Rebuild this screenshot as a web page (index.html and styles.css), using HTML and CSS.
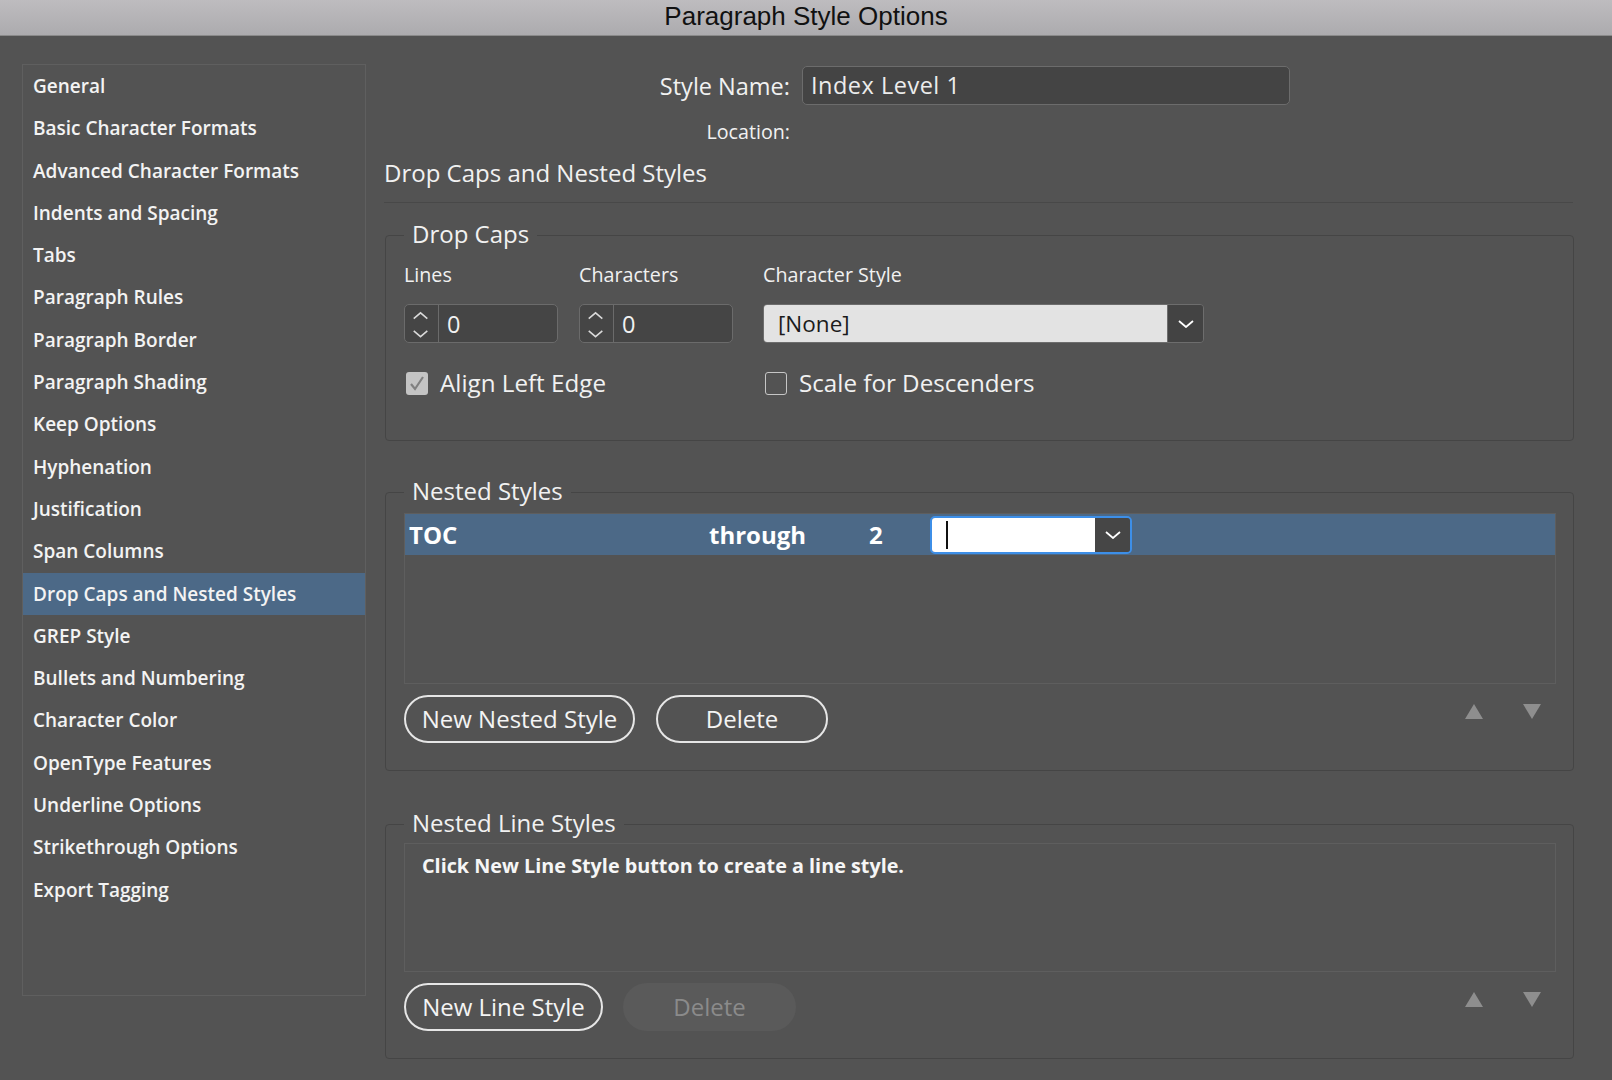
FILE: index.html
```html
<!DOCTYPE html>
<html lang="en">
<head>
<meta charset="utf-8">
<title>Paragraph Style Options</title>
<link rel="stylesheet" href="styles.css">
</head>
<body>
<div class="titlebar">Paragraph Style Options</div>
<div class="main">
  <nav class="sidebar">
    <div class="nav-item">General</div>
    <div class="nav-item">Basic Character Formats</div>
    <div class="nav-item">Advanced Character Formats</div>
    <div class="nav-item">Indents and Spacing</div>
    <div class="nav-item">Tabs</div>
    <div class="nav-item">Paragraph Rules</div>
    <div class="nav-item">Paragraph Border</div>
    <div class="nav-item">Paragraph Shading</div>
    <div class="nav-item">Keep Options</div>
    <div class="nav-item">Hyphenation</div>
    <div class="nav-item">Justification</div>
    <div class="nav-item">Span Columns</div>
    <div class="nav-item active">Drop Caps and Nested Styles</div>
    <div class="nav-item">GREP Style</div>
    <div class="nav-item">Bullets and Numbering</div>
    <div class="nav-item">Character Color</div>
    <div class="nav-item">OpenType Features</div>
    <div class="nav-item">Underline Options</div>
    <div class="nav-item">Strikethrough Options</div>
    <div class="nav-item">Export Tagging</div>
  </nav>

  <section class="content">
    <div class="name-row">
      <span class="field-label">Style Name:</span>
      <div class="name-input">Index Level 1</div>
    </div>
    <div class="loc-row">Location:</div>
    <h2 class="section-title">Drop Caps and Nested Styles</h2>
    <div class="separator"></div>

    <div class="group group-dropcaps">
      <div class="legend">Drop Caps</div>
      <div class="dc-grid dc-labels">
        <span>Lines</span>
        <span>Characters</span>
        <span>Character Style</span>
      </div>
      <div class="dc-grid dc-inputs">
        <div class="stepper">
          <div class="stepper-arrows">
            <svg width="34" height="36" viewBox="0 0 34 36"><polyline points="9,12.5 16,6.5 23,12.5" fill="none" stroke="#dadada" stroke-width="1.6"/><polyline points="9,25 16,31 23,25" fill="none" stroke="#dadada" stroke-width="1.6"/></svg>
          </div>
          <div class="stepper-value">0</div>
        </div>
        <div class="stepper">
          <div class="stepper-arrows">
            <svg width="34" height="36" viewBox="0 0 34 36"><polyline points="9,12.5 16,6.5 23,12.5" fill="none" stroke="#dadada" stroke-width="1.6"/><polyline points="9,25 16,31 23,25" fill="none" stroke="#dadada" stroke-width="1.6"/></svg>
          </div>
          <div class="stepper-value">0</div>
        </div>
        <div class="select">
          <div class="select-value">[None]</div>
          <div class="select-btn">
            <svg width="16" height="8" viewBox="0 0 16 8"><polyline points="1,1 8,7 15,1" fill="none" stroke="#ffffff" stroke-width="1.8"/></svg>
          </div>
        </div>
      </div>
      <div class="dc-grid dc-checks">
        <div class="check">
          <span class="box checked"><svg width="22" height="23" viewBox="0 0 22 23"><polyline points="5,12 9,17 17,5" fill="none" stroke="#808080" stroke-width="2.2"/></svg></span>
          <span>Align Left Edge</span>
        </div>
        <span></span>
        <div class="check">
          <span class="box"></span>
          <span>Scale for Descenders</span>
        </div>
      </div>
    </div>

    <div class="group group-nested">
      <div class="legend">Nested Styles</div>
      <div class="list list-nested">
        <div class="row selected">
          <span class="c-name">TOC</span>
          <span class="c-through">through</span>
          <span class="c-num">2</span>
          <div class="focus-select">
            <div class="focus-field"><span class="caret"></span></div>
            <div class="focus-btn">
              <svg width="16" height="8" viewBox="0 0 16 8"><polyline points="1,1 8,7 15,1" fill="none" stroke="#ffffff" stroke-width="1.8"/></svg>
            </div>
          </div>
        </div>
      </div>
      <div class="btn-row">
        <div class="pill pill-nested">New Nested Style</div>
        <div class="pill pill-delete">Delete</div>
        <div class="arrows">
          <svg width="18" height="15" viewBox="0 0 18 15"><polygon points="0,15 9,0 18,15" fill="#8e8e8e"/></svg>
          <svg width="18" height="15" viewBox="0 0 18 15"><polygon points="0,0 18,0 9,15" fill="#8e8e8e"/></svg>
        </div>
      </div>
    </div>

    <div class="group group-lines">
      <div class="legend">Nested Line Styles</div>
      <div class="list list-lines">
        <div class="hint">Click New Line Style button to create a line style.</div>
      </div>
      <div class="btn-row">
        <div class="pill pill-line">New Line Style</div>
        <div class="pill pill-disabled">Delete</div>
        <div class="arrows">
          <svg width="18" height="15" viewBox="0 0 18 15"><polygon points="0,15 9,0 18,15" fill="#8e8e8e"/></svg>
          <svg width="18" height="15" viewBox="0 0 18 15"><polygon points="0,0 18,0 9,15" fill="#8e8e8e"/></svg>
        </div>
      </div>
    </div>
  </section>
</div>
</body>
</html>
```

FILE: styles.css
```css
* { box-sizing: border-box; }

html, body {
  margin: 0;
  padding: 0;
}

body {
  width: 1612px;
  height: 1080px;
  overflow: hidden;
  background: #535353;
  color: #f1f1f1;
  font-family: "Open Sans", "DejaVu Sans", sans-serif;
}

.titlebar {
  height: 36px;
  background: linear-gradient(#bebcbf, #acabae);
  border-bottom: 1px solid #8a8a8a;
  text-align: center;
  font-family: "Liberation Sans", Arial, sans-serif;
  font-size: 26px;
  line-height: 33px;
  color: #111111;
}

.main {
  display: flex;
  align-items: flex-start;
  padding-left: 22px;
}

/* ---------- sidebar ---------- */
.sidebar {
  margin-top: 28px;
  width: 344px;
  height: 932px;
  border: 1px solid #5f5f5f;
}

.nav-item {
  height: 42.3px;
  line-height: 43px;
  padding-left: 10px;
  font-size: 19px;
  font-weight: 600;
  white-space: nowrap;
  color: #f3f3f3;
}

.nav-item.active {
  background: #4c6987;
}

/* ---------- content ---------- */
.content {
  margin-left: 19px;
  width: 1189px;
}

.name-row {
  display: flex;
  align-items: center;
  margin-top: 30px;
  height: 39px;
  gap: 12px;
}

.field-label {
  width: 405px;
  text-align: right;
  font-size: 23.5px;
}

.name-input {
  width: 488px;
  height: 39px;
  background: #444444;
  border: 1.5px solid #6c6c6c;
  border-radius: 5px;
  padding-left: 8px;
  font-size: 23.5px;
  line-height: 37px;
  letter-spacing: 0.5px;
  color: #ececec;
}

.loc-row {
  margin-top: 15px;
  width: 405px;
  text-align: right;
  font-size: 19.7px;
  line-height: 24px;
}

.section-title {
  margin: 14px 0 0 -1px;
  font-size: 24px;
  font-weight: 400;
  line-height: 30px;
}

.separator {
  margin: 14px 0 0 -1px;
  width: 1189px;
  height: 1px;
  background: #484848;
}

/* ---------- groups ---------- */
.group {
  border: 1px solid #454545;
  border-radius: 4px;
  padding: 0 17px 0 18px;
}

.legend {
  display: block;
  width: max-content;
  margin-top: -17px;
  padding: 0 8px;
  background: #535353;
  font-size: 24px;
  line-height: 30px;
}

.group-dropcaps {
  margin-top: 32px;
  height: 206px;
}

.dc-grid {
  display: grid;
  grid-template-columns: 175px 184px 441px;
  align-items: center;
}

.dc-labels {
  margin-top: 14px;
  font-size: 19.7px;
  line-height: 24px;
}

.dc-inputs {
  margin-top: 17px;
}

.stepper {
  display: flex;
  width: 154px;
  height: 39px;
  background: #454545;
  border: 1.5px solid #6b6b6b;
  border-radius: 5px;
}

.stepper-arrows {
  width: 34px;
  border-right: 1.5px solid #6b6b6b;
  display: flex;
  align-items: center;
  justify-content: center;
}

.stepper-arrows svg { display: block; }

.stepper-value {
  padding-left: 8px;
  font-size: 23.5px;
  line-height: 38px;
}

.select {
  display: flex;
  width: 441px;
  height: 39px;
  border: 1.5px solid #6d6d6d;
  border-radius: 4px;
  overflow: hidden;
}

.select-value {
  flex: 1;
  background: #e3e3e3;
  color: #1b1b1b;
  padding-left: 14px;
  font-size: 22.5px;
  line-height: 37px;
}

.select-btn {
  width: 36px;
  background: #434343;
  border-left: 1.5px solid #6d6d6d;
  display: flex;
  align-items: center;
  justify-content: center;
}

.select-btn svg, .focus-btn svg { display: block; }

.dc-checks {
  margin-top: 25px;
  height: 30px;
}

.check {
  display: flex;
  align-items: center;
  margin-left: 2px;
  font-size: 24.2px;
  line-height: 30px;
  white-space: nowrap;
}

.box {
  display: block;
  width: 22px;
  height: 23px;
  border-radius: 3px;
  margin-right: 12px;
  border: 1.5px solid #c6c6c6;
}

.box.checked {
  background: #c4c4c4;
  border: none;
}

.box svg { display: block; }

/* ---------- nested styles ---------- */
.group-nested {
  margin-top: 51px;
  height: 279px;
}

.list {
  border: 1px solid #5e5e5e;
}

.list-nested {
  margin-top: 7px;
  height: 171px;
}

.row.selected {
  display: flex;
  align-items: center;
  height: 41px;
  padding-left: 4px;
  background: #4c6987;
  font-size: 24px;
  font-weight: 700;
  color: #ffffff;
}

.c-name { width: 300px; }
.c-through { width: 160px; }
.c-num { width: 61px; }

.focus-select {
  display: flex;
  width: 202px;
  height: 38px;
  border: 2px solid #3d8fe8;
  border-radius: 5px;
  overflow: hidden;
}

.focus-field {
  flex: 1;
  background: #ffffff;
  display: flex;
  align-items: center;
}

.caret {
  display: block;
  width: 2px;
  height: 28px;
  margin-left: 14px;
  background: #111111;
}

.focus-btn {
  width: 35px;
  background: #464646;
  display: flex;
  align-items: center;
  justify-content: center;
}

.btn-row {
  display: flex;
  align-items: flex-start;
  margin-top: 11px;
}

.pill {
  height: 48px;
  border: 2px solid #e6e6e6;
  border-radius: 24px;
  font-size: 24px;
  line-height: 44px;
  text-align: center;
  color: #f4f4f4;
  white-space: nowrap;
}

.pill-nested { width: 231px; }
.pill-delete { width: 172px; margin-left: 21px; }
.pill-line { width: 199px; }
.pill-disabled {
  width: 173px;
  margin-left: 20px;
  border-color: transparent;
  background: #5a5a5a;
  color: #8b8b8b;
}

.arrows {
  display: flex;
  gap: 40px;
  margin: 9px 15px 0 auto;
}

.arrows svg { display: block; }

/* ---------- nested line styles ---------- */
.group-lines {
  margin-top: 53px;
  height: 235px;
}

.list-lines {
  margin-top: 5px;
  height: 129px;
}

.hint {
  padding: 10px 0 0 17px;
  font-size: 19.8px;
  font-weight: 700;
  line-height: 24px;
  color: #f6f6f6;
}
```
